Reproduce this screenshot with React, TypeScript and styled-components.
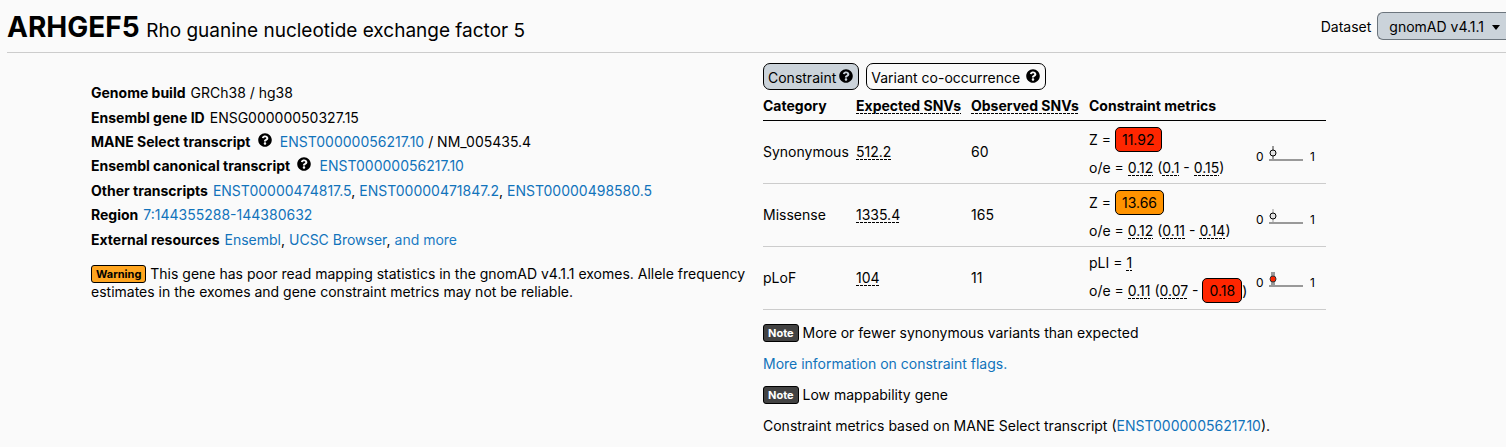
import React from 'react'
import styled, { createGlobalStyle } from 'styled-components'
import { FaQuestionCircle } from 'react-icons/fa'

const GlobalStyle = createGlobalStyle`
  *, *::before, *::after { box-sizing: border-box; }
  body {
    margin: 0;
    background: #fafafa;
    color: #000;
    font-family: Inter, "Liberation Sans", sans-serif;
    font-size: 14px;
    line-height: 18px;
  }
`

const Header = styled.header`
  display: flex;
  align-items: flex-start;
  justify-content: space-between;
  margin-left: 7px;
  padding-top: 12px;
  padding-bottom: 10px;
  border-bottom: 1px solid #ccc;
`

const Title = styled.h1`
  margin: 0;
  font-size: 28px;
  line-height: 30px;
  font-weight: 700;
`

const GeneName = styled.span`
  font-size: 19px;
  line-height: 20px;
  font-weight: 400;
`

const DatasetPicker = styled.div`
  display: flex;
  align-items: baseline;
  gap: 6px;
`

const DatasetButton = styled.button`
  display: flex;
  align-items: center;
  gap: 8px;
  height: 28px;
  padding: 2px 6px 0 11px;
  border: 1px solid #6c757d;
  border-right: 0;
  border-radius: 6px 0 0 6px;
  background: #cbd3da;
  color: #000;
  font: inherit;
`

const Main = styled.main`
  display: grid;
  grid-template-columns: minmax(0, 1fr) 563px;
  gap: 16px;
  padding: 10px 180px 10px 91px;
`

const Attributes = styled.dl`
  display: grid;
  grid-auto-rows: 1fr;
  min-height: 171px;
  margin: 18px 0 13px;
`

const AttributeRow = styled.div`
  display: flex;
  align-items: center;
  gap: 5px;
`

const Term = styled.dt`
  font-weight: 700;
`

const Value = styled.dd`
  margin: 0;
`

const Link = styled.a`
  color: #1173bb;
  text-decoration: none;
`

const LinkButton = styled.button`
  padding: 0;
  border: 0;
  background: none;
  color: #1a7bc4;
  font: inherit;
`

const HelpButton = styled.button`
  display: inline-flex;
  margin: 0 3px 0 4px;
  padding: 0 0 4px;
  border: 0;
  background: none;
  color: #000;
  font-size: 14px;
`

const Paragraph = styled.p`
  margin: 0;
`

const Badge = styled.span<{ $warning?: boolean }>`
  display: inline-block;
  padding: 0 4px;
  border: 1px solid #000;
  border-radius: 3px;
  background: ${p => (p.$warning ? '#ffa51f' : '#424242')};
  color: ${p => (p.$warning ? '#000' : '#fff')};
  font-size: 11px;
  line-height: 16px;
  font-weight: 700;
  vertical-align: top;
`

const TabList = styled.div`
  display: flex;
  gap: 7px;
`

const Tab = styled.button<{ $active?: boolean }>`
  display: flex;
  align-items: center;
  gap: ${p => (p.$active ? 3 : 6)}px;
  height: 27px;
  padding: 2px 5px 0 4px;
  border: 1px solid #000;
  border-radius: 7px;
  background: ${p => (p.$active ? '#cbd3da' : '#fafafa')};
  color: #000;
  font: inherit;

  svg {
    margin-bottom: 4px;
  }
`

const Table = styled.table`
  width: 100%;
  table-layout: fixed;
  border-collapse: collapse;

  th {
    height: 30px;
    padding: 2px 0 0;
    text-align: left;
    font-weight: 700;
    white-space: nowrap;
    border-bottom: 1px solid #000;
  }

  td, tbody th {
    height: 63px;
    padding: 1px 0 0;
    font-weight: 400;
    border-bottom: 1px solid #ccc;
  }
`

const Hint = styled.span`
  background: repeating-linear-gradient(90deg, #000 0 3px, transparent 3px 4px) left bottom / 100% 1px no-repeat;
`

const Flag = styled.span<{ $color: string }>`
  display: inline-block;
  padding: 0 6px;
  border: 1px solid #000;
  border-radius: 5px;
  background: ${p => p.$color};
  line-height: 23px;
`

const Metric = styled.div<{ $flagged?: boolean }>`
  line-height: ${p => (p.$flagged ? 31 : 25)}px;
  white-space: nowrap;
`

const Graph = styled.svg`
  display: block;
  width: 60px;
  height: 30px;
  font-size: 12px;
`

const Notes = styled.section`
  display: grid;
  gap: 13px;
  padding-top: 14px;
`

function Help({ label }: { label: string }) {
  return (
    <HelpButton type="button" aria-label={label}>
      <FaQuestionCircle />
    </HelpButton>
  )
}

function RatioGraph({ interval, flagged }: { interval: number; flagged?: boolean }) {
  return (
    <Graph viewBox="0 0 60 30" role="img" aria-label="Observed to expected ratio">
      <text x="0" y="24">0</text>
      <text x="54" y="24">1</text>
      <path d="M13 23H47" stroke="#999" strokeWidth="2" />
      <rect x={17 - interval / 2} y="9" width={interval} height="13" fill="#999" />
      <circle cx="17" cy="16" r="3" fill={flagged ? '#ff2600' : '#e2e2e2'} stroke={flagged ? '#333' : '#000'} strokeWidth="1" />
    </Graph>
  )
}

const others = ['ENST00000474817.5', 'ENST00000471847.2', 'ENST00000498580.5']

export default function App() {
  return (
    <>
      <GlobalStyle />
      <Header>
        <Title>
          ARHGEF5 <GeneName>Rho guanine nucleotide exchange factor 5</GeneName>
        </Title>
        <DatasetPicker>
          <span id="dataset-label">Dataset</span>
          <DatasetButton type="button" aria-haspopup="menu" aria-describedby="dataset-label">
            gnomAD v4.1.1
            <svg width="8" height="5" viewBox="0 0 8 5" aria-hidden="true">
              <path d="M0 0H8L4 5Z" />
            </svg>
          </DatasetButton>
        </DatasetPicker>
      </Header>
      <Main>
        <section>
          <Attributes>
            <AttributeRow>
              <Term>Genome build</Term>
              <Value>GRCh38 / hg38</Value>
            </AttributeRow>
            <AttributeRow>
              <Term>Ensembl gene ID</Term>
              <Value>ENSG00000050327.15</Value>
            </AttributeRow>
            <AttributeRow>
              <Term>MANE Select transcript <Help label="About MANE Select transcript" /></Term>
              <Value><Link href="#mane">ENST00000056217.10</Link> / NM_005435.4</Value>
            </AttributeRow>
            <AttributeRow>
              <Term>Ensembl canonical transcript <Help label="About canonical transcript" /></Term>
              <Value><Link href="#canonical">ENST00000056217.10</Link></Value>
            </AttributeRow>
            <AttributeRow>
              <Term>Other transcripts</Term>
              <Value>
                {others.map((id, i) => (
                  <React.Fragment key={id}>
                    {i > 0 && ', '}
                    <Link href={`#${id}`}>{id}</Link>
                  </React.Fragment>
                ))}
              </Value>
            </AttributeRow>
            <AttributeRow>
              <Term>Region</Term>
              <Value><Link href="#region">7:144355288-144380632</Link></Value>
            </AttributeRow>
            <AttributeRow>
              <Term>External resources</Term>
              <Value>
                <Link href="#ensembl">Ensembl</Link>, <Link href="#ucsc">UCSC Browser</Link>,{' '}
                <LinkButton type="button">and more</LinkButton>
              </Value>
            </AttributeRow>
          </Attributes>
          <Paragraph>
            <Badge $warning>Warning</Badge> This gene has poor read mapping statistics in the gnomAD v4.1.1
            exomes. Allele frequency estimates in the exomes and gene constraint metrics may not be reliable.
          </Paragraph>
        </section>
        <section>
          <TabList>
            <Tab type="button" $active>Constraint<FaQuestionCircle /></Tab>
            <Tab type="button">Variant co-occurrence<FaQuestionCircle /></Tab>
          </TabList>
          <Table>
            <colgroup>
              <col width="93" />
              <col width="115" />
              <col width="118" />
              <col width="167" />
              <col />
            </colgroup>
            <thead>
              <tr>
                <th scope="col">Category</th>
                <th scope="col"><Hint>Expected SNVs</Hint></th>
                <th scope="col"><Hint>Observed SNVs</Hint></th>
                <th scope="col" colSpan={2}>Constraint metrics</th>
              </tr>
            </thead>
            <tbody>
              <tr>
                <th scope="row">Synonymous</th>
                <td><Hint>512.2</Hint></td>
                <td>60</td>
                <td>
                  <Metric $flagged>Z = <Flag $color="#ff2600">11.92</Flag></Metric>
                  <Metric>o/e = <Hint>0.12</Hint> (<Hint>0.1</Hint> - <Hint>0.15</Hint>)</Metric>
                </td>
                <td><RatioGraph interval={2} /></td>
              </tr>
              <tr>
                <th scope="row">Missense</th>
                <td><Hint>1335.4</Hint></td>
                <td>165</td>
                <td>
                  <Metric $flagged>Z = <Flag $color="#ff9300">13.66</Flag></Metric>
                  <Metric>o/e = <Hint>0.12</Hint> (<Hint>0.11</Hint> - <Hint>0.14</Hint>)</Metric>
                </td>
                <td><RatioGraph interval={1} /></td>
              </tr>
              <tr>
                <th scope="row">pLoF</th>
                <td><Hint>104</Hint></td>
                <td>11</td>
                <td>
                  <Metric>pLI = <Hint>1</Hint></Metric>
                  <Metric $flagged>
                    o/e = <Hint>0.11</Hint> (<Hint>0.07</Hint> - <Flag $color="#ff2600">0.18</Flag>)
                  </Metric>
                </td>
                <td><RatioGraph interval={4} flagged /></td>
              </tr>
            </tbody>
          </Table>
          <Notes>
            <Paragraph><Badge>Note</Badge> More or fewer synonymous variants than expected</Paragraph>
            <Paragraph><Link href="#flags">More information on constraint flags.</Link></Paragraph>
            <Paragraph><Badge>Note</Badge> Low mappability gene</Paragraph>
            <Paragraph>
              Constraint metrics based on MANE Select transcript (<Link href="#mane">ENST00000056217.10</Link>).
            </Paragraph>
          </Notes>
        </section>
      </Main>
    </>
  )
}
